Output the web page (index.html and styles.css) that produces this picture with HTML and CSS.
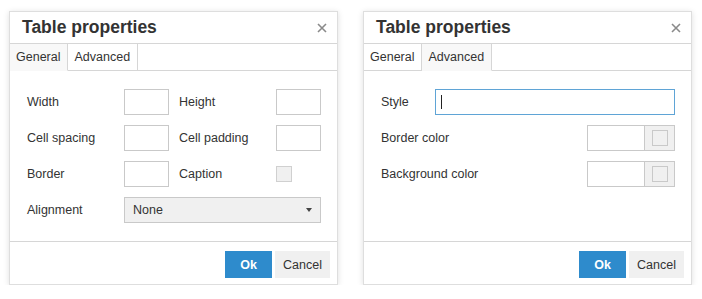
FILE: index.html
```html
<!DOCTYPE html>
<html lang="en">
<head>
    <meta charset="UTF-8">
    <title>Table properties</title>
    <link rel="stylesheet" href="styles.css">
</head>
<body>
    <div class="page">
        <div class="dialog">
            <div class="dialog-header">
                <div class="dialog-title">Table properties</div>
                <svg class="close" width="10" height="10" viewBox="0 0 10 10">
                    <path d="M1 1L9 9M9 1L1 9" stroke="#8a8a8a" stroke-width="1.6"/>
                </svg>
            </div>
            <div class="tabs">
                <div class="tab active">General</div>
                <div class="tab">Advanced</div>
                <div class="tab-fill"></div>
            </div>
            <div class="dialog-body general">
                <div class="label">Width</div>
                <div class="input"></div>
                <div class="label">Height</div>
                <div class="input"></div>

                <div class="label">Cell spacing</div>
                <div class="input"></div>
                <div class="label">Cell padding</div>
                <div class="input"></div>

                <div class="label">Border</div>
                <div class="input"></div>
                <div class="label">Caption</div>
                <div class="check-cell"><div class="checkbox"></div></div>

                <div class="label">Alignment</div>
                <div class="select">
                    <span>None</span>
                    <span class="caret"></span>
                </div>
            </div>
            <div class="dialog-footer">
                <div class="btn btn-primary">Ok</div>
                <div class="btn">Cancel</div>
            </div>
        </div>

        <div class="dialog">
            <div class="dialog-header">
                <div class="dialog-title">Table properties</div>
                <svg class="close" width="10" height="10" viewBox="0 0 10 10">
                    <path d="M1 1L9 9M9 1L1 9" stroke="#8a8a8a" stroke-width="1.6"/>
                </svg>
            </div>
            <div class="tabs">
                <div class="tab">General</div>
                <div class="tab active">Advanced</div>
                <div class="tab-fill"></div>
            </div>
            <div class="dialog-body advanced">
                <div class="row">
                    <div class="label style-label">Style</div>
                    <div class="input wide focused"><span class="cursor"></span></div>
                </div>
                <div class="row">
                    <div class="label">Border color</div>
                    <div class="color-picker">
                        <div class="color-value"></div>
                        <div class="color-btn"><div class="swatch"></div></div>
                    </div>
                </div>
                <div class="row">
                    <div class="label">Background color</div>
                    <div class="color-picker">
                        <div class="color-value"></div>
                        <div class="color-btn"><div class="swatch"></div></div>
                    </div>
                </div>
            </div>
            <div class="dialog-footer">
                <div class="btn btn-primary">Ok</div>
                <div class="btn">Cancel</div>
            </div>
        </div>
    </div>
</body>
</html>
```

FILE: styles.css
```css
body {
    margin: 0;
    background-color: #fff;
    font-family: 'Liberation Sans', Arial, sans-serif;
    font-size: 12.5px;
    color: #333;
}

.page {
    display: flex;
    gap: 25px;
    padding: 11px 0 0 9px;
}

.dialog {
    width: 329px;
    box-sizing: border-box;
    border: 1px solid #dedede;
    box-shadow: 0 1px 6px rgba(0, 0, 0, 0.13);
    background-color: #fff;
}

.dialog-header {
    height: 31px;
    display: flex;
    align-items: center;
    justify-content: space-between;
    padding: 0 10px 0 12px;
    border-bottom: 1px solid #d6d6d6;
}

.dialog-title {
    font-size: 17.5px;
    font-weight: 700;
    color: #333;
}

.tabs {
    display: flex;
    height: 27px;
}

.tab {
    display: flex;
    align-items: center;
    padding: 0 7px 0 6px;
    border-right: 1px solid #d6d6d6;
    border-bottom: 1px solid #d6d6d6;
    background-color: #fff;
}

.tab.active {
    background-color: #f8f8f8;
    border-bottom-color: transparent;
}

.tab-fill {
    flex: 1;
    border-bottom: 1px solid #d6d6d6;
}

.dialog-body {
    height: 170px;
    box-sizing: border-box;
    padding: 18px 16px 18px 17px;
}

.general {
    display: grid;
    grid-template-columns: 87px 45px 87px 45px;
    grid-auto-rows: 26px;
    column-gap: 10px;
    row-gap: 10px;
}

.label {
    display: flex;
    align-items: center;
}

.input {
    box-sizing: border-box;
    height: 26px;
    border: 1px solid #c9c9c9;
    background-color: #fff;
}

.check-cell {
    display: flex;
    align-items: center;
}

.checkbox {
    width: 16px;
    height: 16px;
    box-sizing: border-box;
    border: 1px solid #d0d0d0;
    background-color: #f0f0f0;
}

.select {
    grid-column: 2 / 5;
    display: flex;
    align-items: center;
    justify-content: space-between;
    box-sizing: border-box;
    height: 26px;
    padding: 0 8px 0 8px;
    border: 1px solid #c9c9c9;
    background-color: #f0f0f0;
}

.caret {
    width: 0;
    height: 0;
    border-left: 3px solid transparent;
    border-right: 3px solid transparent;
    border-top: 4px solid #444;
}

.advanced {
    display: flex;
    flex-direction: column;
    gap: 10px;
}

.row {
    display: flex;
    justify-content: space-between;
    height: 26px;
}

.style-label {
    width: 54px;
}

.input.wide {
    flex: 1;
    display: flex;
    align-items: center;
    padding-left: 5px;
}

.input.focused {
    border-color: #5fa4d6;
}

.cursor {
    width: 1px;
    height: 14px;
    background-color: #222;
}

.color-picker {
    display: flex;
    width: 88px;
    height: 26px;
    box-sizing: border-box;
    border: 1px solid #c9c9c9;
}

.color-value {
    flex: 1;
    background-color: #fff;
}

.color-btn {
    width: 29px;
    display: flex;
    align-items: center;
    justify-content: center;
    border-left: 1px solid #c9c9c9;
    background-color: #f0f0f0;
}

.swatch {
    width: 16px;
    height: 16px;
    box-sizing: border-box;
    border: 1px solid #c9c9c9;
    background-color: #f0f0f0;
}

.dialog-footer {
    height: 43px;
    box-sizing: border-box;
    display: flex;
    justify-content: flex-end;
    align-items: flex-start;
    gap: 3px;
    padding: 9px 7px 0 0;
    border-top: 1px solid #d6d6d6;
}

.btn {
    height: 27px;
    box-sizing: border-box;
    display: flex;
    align-items: center;
    justify-content: center;
    padding: 0 8px;
    min-width: 47px;
    background-color: #f0f0f0;
    color: #333;
}

.btn-primary {
    background-color: #2e8bcc;
    color: #fff;
    font-weight: 700;
}
```
